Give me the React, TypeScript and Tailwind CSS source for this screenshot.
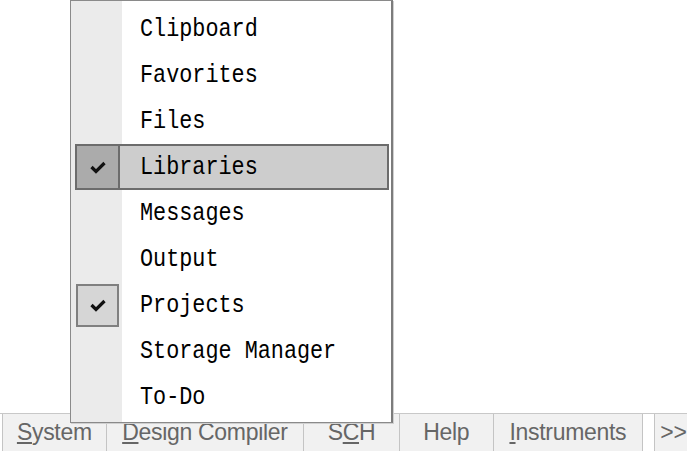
import React from "react";

const items = [
  { label: "Clipboard" },
  { label: "Favorites" },
  { label: "Files" },
  { label: "Libraries", checked: true, active: true },
  { label: "Messages" },
  { label: "Output" },
  { label: "Projects", checked: true },
  { label: "Storage Manager" },
  { label: "To-Do" },
];

function Check() {
  return (
    <svg width="18" height="14" viewBox="0 0 18 14" className="shrink-0">
      <path d="M2.5 7 L7 11.5 L15.5 3" fill="none" stroke="#111" strokeWidth="3.2" />
    </svg>
  );
}

function Tab({ children, w }: { children: React.ReactNode; w: string }) {
  return (
    <div
      className={`${w} h-full flex items-center justify-center border-r border-[#c4c4c4] bg-[#f1f1f1] text-[#666666] text-[23px] leading-none tracking-[-0.3px]`}
      style={{ fontFamily: '"Liberation Sans", Arial, sans-serif' }}
    >
      {children}
    </div>
  );
}

function Label({ text }: { text: string }) {
  return (
    <span
      className="inline-block scale-y-[1.15] text-[21.8px] text-black leading-none"
      style={{ fontFamily: '"Liberation Mono", "Courier New", monospace' }}
    >
      {text}
    </span>
  );
}

export default function App() {
  return (
    <div className="w-[687px] h-[451px] bg-white relative overflow-hidden flex flex-col">
      <div className="flex-1" />
      <div className="h-[38px] flex flex-row border-t border-[#c8c8c8] bg-white">
        <div className="w-[3px] h-full border-r border-[#c4c4c4]" />
        <Tab w="w-[104px]">
          <span><u className="underline-offset-2">S</u>ystem</span>
        </Tab>
        <Tab w="w-[198px]">
          <span><u className="underline-offset-2">D</u>esign Compiler</span>
        </Tab>
        <Tab w="w-[96px]">
          <span>S<u className="underline-offset-2">C</u>H</span>
        </Tab>
        <Tab w="w-[94px]">
          <span>Help</span>
        </Tab>
        <Tab w="w-[150px]">
          <span><u className="underline-offset-2">I</u>nstruments</span>
        </Tab>
        <div className="w-[11px] h-full bg-white" />
        <div
          className="flex-1 h-full flex items-center pl-[5px] border-l border-[#c4c4c4] bg-[#f1f1f1] text-[#666666] text-[23px] leading-none"
          style={{ fontFamily: '"Liberation Sans", Arial, sans-serif' }}
        >
          &gt;&gt;
        </div>
      </div>

      {/* popup menu */}
      <div className="absolute left-[70px] top-0 w-[323px] h-[423px] bg-white border border-[#8a8a8a] border-r-2 border-r-[#7c7c7c] shadow-[1px_1px_0_#d0d0d0]">
        <div className="absolute left-0 top-0 bottom-0 w-[51px] bg-[#ebebeb]" />
        <div className="relative flex flex-col pt-[5px]">
          {items.map((it) => (
            <div key={it.label} className="h-[46px] flex items-center">
              {it.active ? (
                <div className="ml-[4px] mr-[2px] h-[46px] flex-1 flex items-center border-2 border-[#6c6c6c] bg-[#cdcdcd]">
                  <div className="w-[43px] h-full flex items-center justify-center bg-[#ababab] border-r-2 border-[#6c6c6c]">
                    <Check />
                  </div>
                  <span className="ml-[20px]">
                    <Label text={it.label} />
                  </span>
                </div>
              ) : (
                <>
                  <div className="w-[51px] h-full flex items-center pl-[5px]">
                    {it.checked && (
                      <div className="w-[43px] h-[43px] flex items-center justify-center bg-[#d6d6d6] border-2 border-[#808080]">
                        <Check />
                      </div>
                    )}
                  </div>
                  <span className="ml-[18px]">
                    <Label text={it.label} />
                  </span>
                </>
              )}
            </div>
          ))}
        </div>
      </div>
    </div>
  );
}
